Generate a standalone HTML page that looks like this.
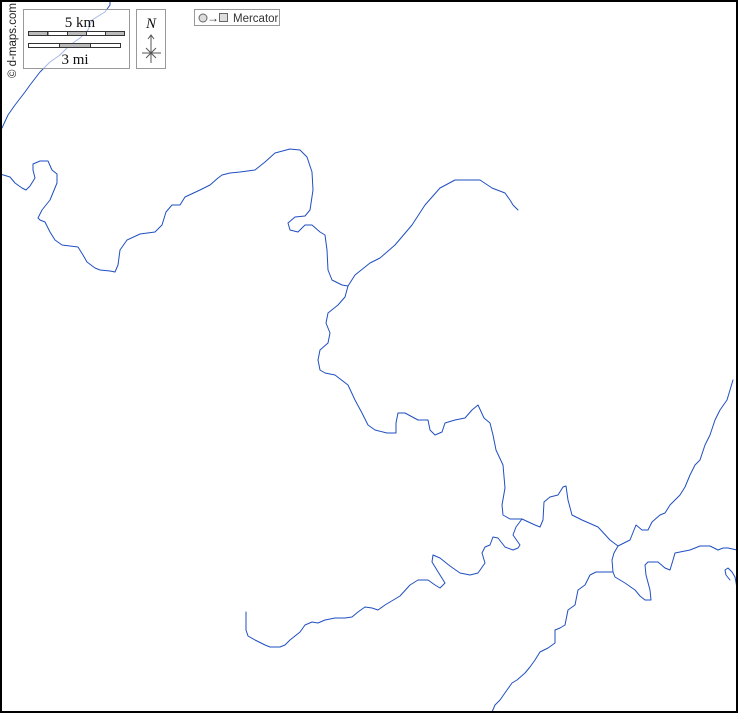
<!DOCTYPE html>
<html><head><style>
html,body{margin:0;padding:0;background:#fff}
svg{display:block}
</style></head><body>
<svg width="738" height="713" viewBox="0 0 738 713" xmlns="http://www.w3.org/2000/svg">
<rect x="0" y="0" width="738" height="713" fill="#fff"/>
<g fill="none" stroke="#1f4fc0" stroke-width="1" stroke-linejoin="round" stroke-linecap="round">
<polyline points="110,0 110,5 105,12 100,15 92,20 88,30 80,38 70,45 60,55 50,62 40,72 30,85 25,92 15,105 8,115 2,128"/>
<polyline points="0,174 10,177 15,183 22,188 26,190 30,186 35,178 33,170 33,164 40,161 48,161 52,170 57,174 57,183 50,200 42,210 38,218 40,220 45,222 50,232 55,240 62,245 78,247 83,255 87,262 95,268 100,270 110,271 115,272 118,265 120,250 127,240 140,234 155,232 162,225 166,212 172,205 180,205 185,197 200,190 210,185 218,178 222,175 230,173 240,172 255,170 265,162 275,153 290,149 300,150 307,157 312,172 313,190 310,210 305,216 295,217 288,223 290,230 298,232 305,225 312,225 320,232 325,235 327,250 328,270 332,280 342,285 348,286"/>
<polyline points="348,286 355,275 370,263 380,258 395,245 412,225 425,205 440,188 455,180 470,180 480,180 492,188 505,193 510,200 513,205 518,210"/>
<polyline points="348,286 345,297 338,305 328,313 326,323 330,333 328,343 320,350 318,360 320,370 325,373 335,375 348,385 355,400 362,413 368,425 375,430 387,433 396,433 396,423 398,413 405,413 418,420 428,420 430,430 435,435 442,432 445,423 455,420 465,418 472,410 478,405 484,418 490,423 493,435 496,450 503,465 505,488 502,505 503,515 510,519 522,519 535,525 540,527 543,520 544,502 550,497 558,495 563,487 566,486 568,500 572,515 582,520 598,527 610,540 618,546"/>
<polyline points="522,519 516,527 513,535 520,545 518,548 513,550 505,547 498,538 493,537 490,545 485,547 482,553 485,563 478,573 470,575 460,573 450,566 440,558 433,555 432,562 440,575 445,583 440,588 435,585 428,580 418,580 410,585 400,596 385,605 378,610 372,608 365,607 358,612 352,617 345,618 335,618 325,620 318,623 312,622 305,625 300,632 290,640 285,645 280,647 270,647 265,645 255,640 248,636 246,630 246,612"/>
<polyline points="618,546 630,540 634,530 636,525 642,530 648,530 652,522 660,515 665,513 670,505 680,495 685,487 690,475 695,465 700,460 705,445 710,435 715,420 720,410 727,400 730,390 733,380"/>
<polyline points="618,546 614,553 612,560 613,572 596,572 590,575 585,585 578,590 575,605 568,610 565,625 560,628 555,630 555,643 548,648 540,652 535,660 530,667 525,673 517,680 512,683 507,690 500,700 495,705 492,712"/>
<polyline points="613,572 615,577 625,583 635,590 640,596 645,600 651,600 650,590 646,575 645,565 648,562 658,562 665,568 670,570 673,560 675,553 680,552 690,550 700,546 710,546 718,550 723,548 728,548 737,550"/>
<polyline points="737,588 735,577 732,572 728,568 725,570 726,575 730,580"/>
</g>
<rect x="23.5" y="9.5" width="106" height="59" fill="#fff" fill-opacity="0.6" stroke="#999"/>
<rect x="28.5" y="31.5" width="96" height="4" fill="#fff" stroke="#333"/>
<rect x="28.5" y="31.5" width="19" height="4" fill="#bbb" stroke="#333"/>
<rect x="67.5" y="31.5" width="19" height="4" fill="#bbb" stroke="#333"/>
<rect x="105.5" y="31.5" width="19" height="4" fill="#bbb" stroke="#333"/>
<line x1="48" y1="31" x2="48" y2="36" stroke="#333"/>
<rect x="28.5" y="43.5" width="92" height="4" fill="#fff" stroke="#333"/>
<rect x="59.5" y="43.5" width="31" height="4" fill="#bbb" stroke="#333"/>
<text x="80" y="27" font-family="Liberation Serif, serif" font-size="15" text-anchor="middle" fill="#111">5 km</text>
<text x="75" y="64" font-family="Liberation Serif, serif" font-size="15" text-anchor="middle" fill="#111">3 mi</text>
<rect x="136.5" y="9.5" width="29" height="59" fill="#fff" stroke="#999"/>
<text x="151" y="28" font-family="Liberation Serif, serif" font-size="15" font-style="italic" text-anchor="middle" fill="#111">N</text>
<g stroke="#555" stroke-width="1" fill="none">
<line x1="151" y1="36" x2="151" y2="63"/>
<line x1="142" y1="53" x2="161" y2="53"/>
<line x1="146" y1="48" x2="156" y2="58"/>
<line x1="156" y1="48" x2="146" y2="58"/>
<polyline points="148,39 151,35 154,39"/>
</g>
<rect x="194.5" y="9.5" width="85" height="16" fill="#fff" stroke="#999"/>
<circle cx="203" cy="18" r="4" fill="#ddd" stroke="#666"/>
<text x="207" y="22" font-family="Liberation Sans, sans-serif" font-size="12" fill="#333">→</text>
<rect x="219.5" y="13.5" width="8" height="8" fill="#ddd" stroke="#666"/>
<text x="233" y="22" font-family="Liberation Sans, sans-serif" font-size="11.5" fill="#333">Mercator</text>
<text transform="translate(16,78) rotate(-90)" font-family="Liberation Sans, sans-serif" font-size="11.5" fill="#222">© d-maps.com</text>
<rect x="1" y="1" width="736" height="711" fill="none" stroke="#000" stroke-width="2"/>
</svg>
</body></html>
